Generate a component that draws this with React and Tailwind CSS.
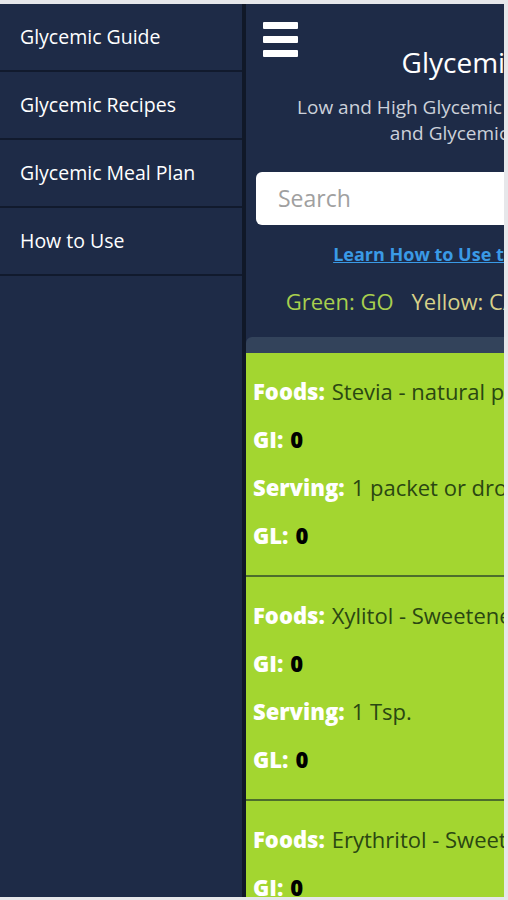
import React from 'react';

const menu = ['Glycemic Guide', 'Glycemic Recipes', 'Glycemic Meal Plan', 'How to Use'];

const foods = [
    { name: 'Stevia - natural plant sweetener', gi: '0', serving: '1 packet or drops', gl: '0' },
    { name: 'Xylitol - Sweetener', gi: '0', serving: '1 Tsp.', gl: '0' },
    { name: 'Erythritol - Sweetener', gi: '0', serving: '1 Tsp.', gl: '0' },
];

const Row = ({ label, children }) => (
    <div className="h-[48px] flex items-center whitespace-nowrap">
        <span className="font-extrabold text-white">{label}</span>
        <span className="ml-[7px]">{children}</span>
    </div>
);

const App = () => {
    return (
        <div
            className="h-[900px] w-[508px] bg-[#e6e7ea] pt-[4px] pr-[4px] pb-[3px] overflow-hidden"
            style={{ fontFamily: '"Open Sans", "Noto Sans", sans-serif' }}
        >
            <div className="h-full flex overflow-hidden bg-[#1e2b47]">
                {/* Side menu */}
                <aside className="w-[242px] shrink-0 bg-[#1e2b47]">
                    {menu.map((item) => (
                        <div
                            key={item}
                            className="h-[68px] flex items-center pl-[20px] border-b-2 border-[#111a2d] text-white text-[19.5px] font-medium"
                        >
                            {item}
                        </div>
                    ))}
                </aside>

                {/* Main page, pushed aside by the menu */}
                <main className="w-[512px] shrink-0 border-l-4 border-[#101828] bg-[#1e2b47]">
                    <div className="pl-[17px] pt-[18px]">
                        <div className="w-[35px] flex flex-col gap-[7px]">
                            <span className="h-[7px] bg-white rounded-[1px]" />
                            <span className="h-[7px] bg-white rounded-[1px]" />
                            <span className="h-[7px] bg-white rounded-[1px]" />
                        </div>
                    </div>

                    <h1 className="-mt-[13px] text-center text-white text-[28px] leading-[36px] whitespace-nowrap">
                        Glycemic Index
                    </h1>
                    <p className="mt-[14px] text-center text-[#ccd1da] text-[19px] leading-[26px] whitespace-nowrap">
                        Low and High Glycemic Index Foods Database
                        <br />
                        and Glycemic Load Chart
                    </p>

                    <div className="mx-[10px] mt-[26px] h-[53px] bg-white rounded-[6px] flex items-center pl-[22px]">
                        <span className="text-[23px] text-[#a0a0a0]">Search</span>
                    </div>

                    <div className="mt-[17px] text-center leading-[24px] whitespace-nowrap">
                        <a className="text-[18px] font-bold text-[#3a9ae6] underline">
                            Learn How to Use the Glycemic Chart
                        </a>
                    </div>

                    <div className="mt-[19px] text-center text-[22px] leading-[30px] whitespace-nowrap">
                        <span className="text-[#a8cf4e]">Green: GO</span>
                        <span className="ml-[18px] text-[#d7d18a]">Yellow: CAUTION</span>
                        <span className="ml-[24px] text-[#e57373]">Red: STOP</span>
                    </div>

                    <div className="mt-[21px] rounded-t-[6px] bg-[#33435b] pt-[16px]">
                        <div className="bg-[#a3d630] text-[22px] text-[#2a4712]">
                            {foods.map((f) => (
                                <div key={f.name} className="pl-[7px] pt-[14px] pb-[16px] border-b-2 border-[#4d6e2c]">
                                    <Row label="Foods:">{f.name}</Row>
                                    <Row label="GI:">
                                        <span className="font-extrabold text-black">{f.gi}</span>
                                    </Row>
                                    <Row label="Serving:">{f.serving}</Row>
                                    <Row label="GL:">
                                        <span className="font-extrabold text-black">{f.gl}</span>
                                    </Row>
                                </div>
                            ))}
                        </div>
                    </div>
                </main>
            </div>
        </div>
    );
};

export default App;
